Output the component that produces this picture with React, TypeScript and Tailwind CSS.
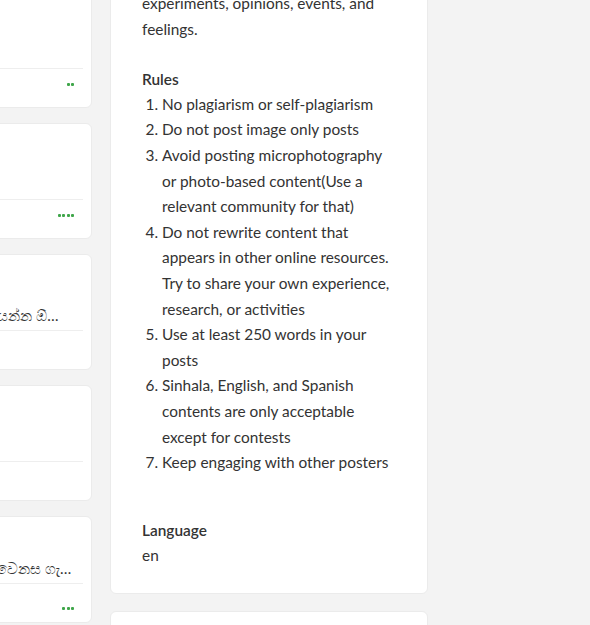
import React from "react";

const font = { fontFamily: "Lato, 'Noto Sans', sans-serif" };

function Dots({ n }: { n: number }) {
  return (
    <div className="flex gap-[1.5px]">
      {Array.from({ length: n }).map((_, i) => (
        <span key={i} className="block w-[3px] h-[3px] rounded-[1px] bg-[#3fa64a]" />
      ))}
    </div>
  );
}

function LeftCard({
  upper,
  text,
  dots,
  footerPt,
}: {
  upper: string;
  text?: string;
  dots?: number;
  footerPt?: string;
}) {
  return (
    <div className="bg-white rounded-[6px] border border-[#ebebeb] overflow-hidden">
      <div className={`${upper} flex flex-col justify-end px-[14px] pb-[5px]`}>
        {text && (
          <div className="truncate text-[15px] leading-[20px] text-[#333] text-right">{text}</div>
        )}
      </div>
      <div className="mx-[8px] border-t border-[#eeeeee]" />
      <div className={`h-[38px] flex justify-end pr-[17px] ${footerPt ?? "pt-[14px]"}`}>
        {dots ? <Dots n={dots} /> : null}
      </div>
    </div>
  );
}

export default function App() {
  return (
    <div className="min-h-[625px] w-[590px] bg-[#f3f3f3] overflow-hidden" style={font}>
      <div className="flex gap-[18px] ml-[-208px]">
        <div className="w-[300px] flex flex-col gap-[15px] mt-[-9px] shrink-0">
          <LeftCard upper="h-[76px]" dots={2} />
          <LeftCard upper="h-[75px]" dots={4} />
          <LeftCard upper="h-[75px]" text="මගේ ජීවිතයේ අත්දැකීම් ගැන ලියන්න ඕනේ නම් ඒ තමය් පසුව" />
          <LeftCard upper="h-[75px]" />
          <LeftCard upper="h-[66px]" text="මම අද කියන්න යන්නේ අද මේ වෙනස ගැනයි" dots={3} footerPt="pt-[23px]" />
        </div>
        <div className="w-[318px] shrink-0 flex flex-col gap-[17px] mt-[-35px]">
          <div className="bg-white rounded-[6px] border border-[#ebebeb] pl-[31px] pr-[32px] pt-[25px] pb-[24px] text-[15.4px] leading-[25.6px] text-[#333]">
            <p className="mb-[25px]">
              experiments, opinions, events, and feelings.
            </p>
            <div className="font-semibold leading-[24.6px]">Rules</div>
            <ol className="list-decimal pl-[20px] mb-[42px]">
              <li>No plagiarism or self-plagiarism</li>
              <li>Do not post image only posts</li>
              <li>Avoid posting microphotography or photo-based content(Use a relevant community for that)</li>
              <li>Do not rewrite content that appears in other online resources. Try to share your own experience, research, or activities</li>
              <li>Use at least 250 words in your posts</li>
              <li>Sinhala, English, and Spanish contents are only acceptable except for contests</li>
              <li>Keep engaging with other posters</li>
            </ol>
            <div className="font-semibold">Language</div>
            <div>en</div>
          </div>
          <div className="bg-white rounded-[6px] border border-[#ebebeb] h-[100px]" />
        </div>
      </div>
    </div>
  );
}
